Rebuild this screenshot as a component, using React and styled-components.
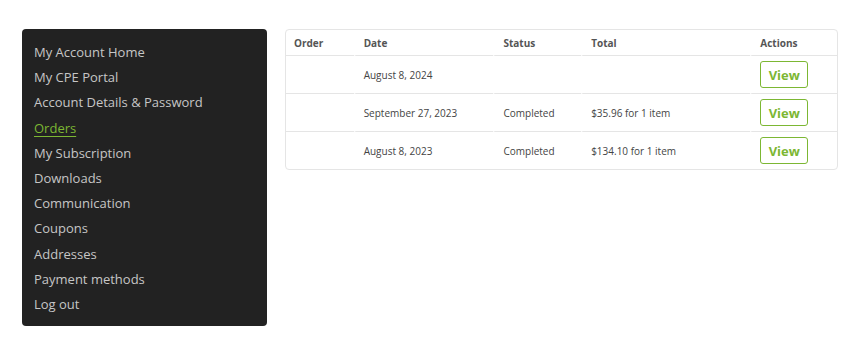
import React from 'react';
import styled, { createGlobalStyle } from 'styled-components';

const GlobalStyle = createGlobalStyle`
  body {
    margin: 0;
    background: #fff;
    font-family: 'Open Sans', 'Noto Sans', sans-serif;
  }
`;

const Page = styled.div`
  display: flex;
  align-items: flex-start;
  gap: 18px;
  padding: 29px 13px 0 22px;
`;

const Sidebar = styled.nav`
  width: 245px;
  box-sizing: border-box;
  background: #222;
  border-radius: 4px;
  padding: 11px 12px 9px;
`;

const NavList = styled.ul`
  list-style: none;
  margin: 0;
  padding: 0;
  display: flex;
  flex-direction: column;
`;

const NavLink = styled.a`
  display: block;
  font-size: 13px;
  line-height: 25.2px;
  color: ${(props) => (props.$active ? '#7cb733' : '#c6c6c6')};
  text-decoration: ${(props) => (props.$active ? 'underline' : 'none')};
  text-underline-offset: 3px;
  cursor: pointer;
`;

const Content = styled.div`
  flex: 1;
`;

const Table = styled.table`
  width: 100%;
  border: 1px solid #e5e5e5;
  border-radius: 4px;
  border-collapse: separate;
  border-spacing: 0;
  font-size: 10px;
  color: #444;
`;

const Th = styled.th`
  text-align: left;
  font-weight: 700;
  color: #555;
  height: 25px;
  padding: 0 8px;
  width: ${(props) => props.$w}px;
  & + & {
    border-left: 2px solid #fff;
  }
`;

const Td = styled.td`
  border-top: 1px solid #e5e5e5;
  height: 37px;
  padding: 0 8px;
  & + & {
    border-left: 2px solid #fff;
  }
`;

const ViewButton = styled.button`
  font-family: inherit;
  font-size: 13px;
  font-weight: 700;
  color: #7cb733;
  background: #fff;
  border: 1.5px solid #7cb733;
  border-radius: 3px;
  width: 48px;
  height: 27px;
  padding: 0;
  cursor: pointer;
`;

const links = [
  'My Account Home',
  'My CPE Portal',
  'Account Details & Password',
  'Orders',
  'My Subscription',
  'Downloads',
  'Communication',
  'Coupons',
  'Addresses',
  'Payment methods',
  'Log out',
];

const orders = [
  { date: 'August 8, 2024', status: '', total: '' },
  { date: 'September 27, 2023', status: 'Completed', total: '$35.96 for 1 item' },
  { date: 'August 8, 2023', status: 'Completed', total: '$134.10 for 1 item' },
];

export default function App() {
  return (
    <>
      <GlobalStyle />
      <Page>
        <Sidebar>
          <NavList>
            {links.map((l) => (
              <li key={l}>
                <NavLink $active={l === 'Orders'}>{l}</NavLink>
              </li>
            ))}
          </NavList>
        </Sidebar>
        <Content>
          <Table>
            <thead>
              <tr>
                <Th $w={52}>Order</Th>
                <Th $w={123}>Date</Th>
                <Th $w={70}>Status</Th>
                <Th $w={153}>Total</Th>
                <Th $w={69}>Actions</Th>
              </tr>
            </thead>
            <tbody>
              {orders.map((o) => (
                <tr key={o.date}>
                  <Td />
                  <Td>{o.date}</Td>
                  <Td>{o.status}</Td>
                  <Td>{o.total}</Td>
                  <Td>
                    <ViewButton>View</ViewButton>
                  </Td>
                </tr>
              ))}
            </tbody>
          </Table>
        </Content>
      </Page>
    </>
  );
}
